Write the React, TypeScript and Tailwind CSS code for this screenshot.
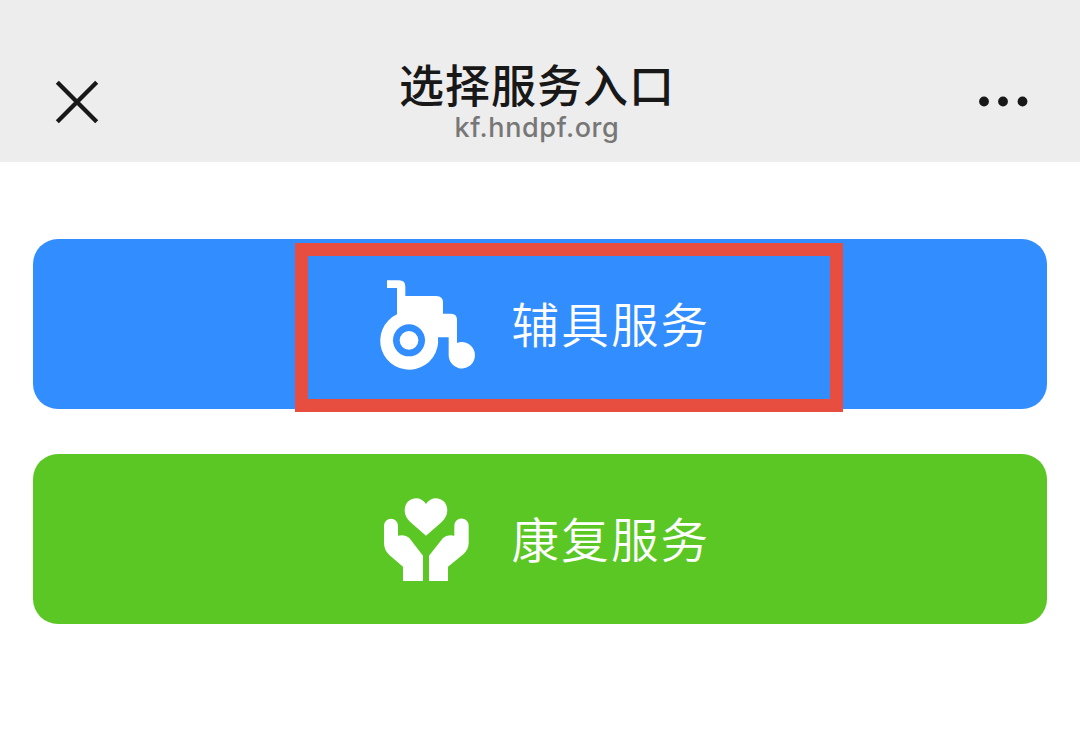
import type { ReactNode } from "react"

function WheelchairIcon() {
  return (
    <svg viewBox="0 0 360 330" className="mt-[2px] h-[110px] w-[120px] shrink-0" fill="#fff">
      <path d="M51 31H87Q106 31 106 50V78H199Q219 78 219 98V131H243Q261 131 261 149V219A39.5 39.5 0 1 1 236 257V202H204A87 87 0 1 1 81 133V54H51Z" />
      <circle cx="117" cy="211" r="48" fill="#328dff" />
      <circle cx="117" cy="211" r="28" />
    </svg>
  )
}

function CareIcon() {
  return (
    <svg viewBox="0 0 360 330" className="mt-[2px] h-[110px] w-[120px] shrink-0" fill="#fff">
      <path d="M168 152L120 110C106 97 102 84 105 68C110 37 151 29 168 57C185 29 226 37 231 68C234 84 229 97 216 110Z" />
      <path d="M42 122A20 20 0 0 1 84 122V152Q106 147 118 159L159 212V288H99V245L58 210Q42 195 42 174Z" />
      <path d="M296 122A20 20 0 0 0 253 122V152Q231 147 219 159L177 212V288H234V245L280 208Q296 193 296 174Z" />
    </svg>
  )
}

function ServiceButton({ icon, label, className }: { icon: ReactNode; label: string; className: string }) {
  return (
    <button className={`flex h-[170px] w-full items-center gap-[21.5px] rounded-[25px] pl-[337px] ${className}`}>
      {icon}
      <span className="pt-[5px] text-[47.5px] leading-[70px] font-[350] tracking-[2.2px] whitespace-nowrap text-white">
        {label}
      </span>
    </button>
  )
}

export default function App() {
  return (
    <div className="min-h-screen bg-white [font-family:'Liberation_Sans','Noto_Sans_CJK_SC',sans-serif]">
      {/* Browser bar */}
      <header className="flex h-[162px] items-start justify-between bg-[#ededed] px-[52px]">
        <button aria-label="关闭" className="mt-[77px] w-[120px]">
          <svg viewBox="0 0 50 50" className="size-[50px]" stroke="#181818" strokeWidth="4.3">
            <path d="M5.3 5.3L44.7 44.7M44.7 5.3L5.3 44.7" />
          </svg>
        </button>

        <div className="mr-[6px] flex flex-col items-center pt-[54px]">
          <h1 className="text-[45px] leading-[68px] font-[450] tracking-[1px] text-[#181818]">选择服务入口</h1>
          <p className="-mt-[10px] [font-family:Inter,sans-serif] text-[27px] leading-[32px] font-medium tracking-[0.6px] text-[#777]">
            kf.hndpf.org
          </p>
        </div>

        <button aria-label="更多" className="mt-[77px] flex w-[120px] justify-end">
          <svg viewBox="0 0 50 50" className="size-[50px]" fill="#181818">
            <circle cx="6" cy="24.5" r="4.9" />
            <circle cx="25" cy="24.5" r="4.9" />
            <circle cx="44.5" cy="24.5" r="4.9" />
          </svg>
        </button>
      </header>

      <main className="flex flex-col gap-[45px] px-[33px] pt-[77px]">
        <div className="relative">
          <ServiceButton icon={<WheelchairIcon />} label="辅具服务" className="bg-[#328dff]" />
          {/* Highlight frame */}
          <div className="pointer-events-none absolute top-[4px] left-[262px] h-[169px] w-[548px] border-[13px] border-[#e84e40]" />
        </div>
        <ServiceButton icon={<CareIcon />} label="康复服务" className="bg-[#5bc724]" />
      </main>
    </div>
  )
}
